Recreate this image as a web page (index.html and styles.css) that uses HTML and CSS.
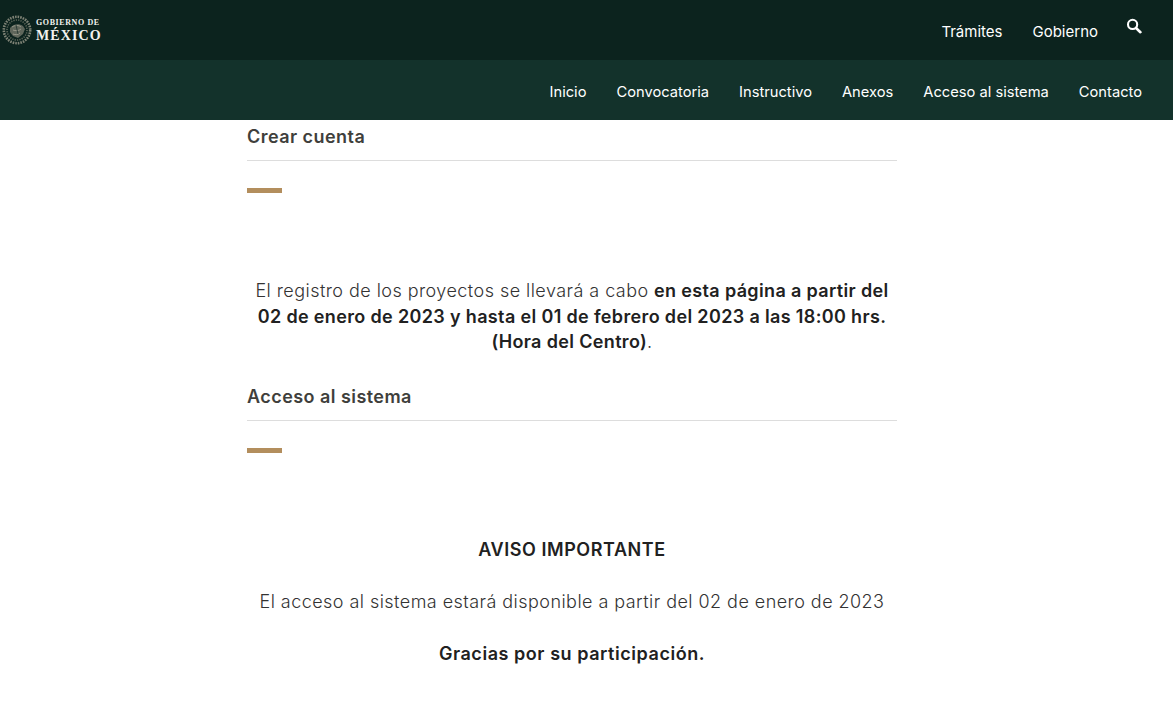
FILE: index.html
```html
<!DOCTYPE html>
<html lang="es">
<head>
    <meta charset="UTF-8">
    <title>Crear cuenta</title>
    <link rel="stylesheet" href="styles.css">
</head>

<body>
    <header class="top-bar">
        <a class="brand" href="#">
            <svg class="seal" viewBox="0 0 30 30" width="30" height="30">
                <circle cx="15" cy="15" r="13.2" fill="none" stroke="#7f8376" stroke-width="2.6" stroke-dasharray="1.6 1"/>
                <circle cx="15" cy="15" r="10" fill="none" stroke="#5f675b" stroke-width="1.6" stroke-dasharray="1.2 1.2"/>
                <path d="M8 13c3-4 9-5 13-2l2 3-2 5-5 4-5-2-3-4z" fill="#5f665b"/>
                <path d="M10 12c3-2 7-2 9 0M11 15c2 1 6 1 8-1M11 19c2 1 5 1 7-1" fill="none" stroke="#a4a596" stroke-width="0.8"/>
                <path d="M14 10l2 9" stroke="#2c3d36" stroke-width="1"/>
            </svg>
            <span class="brand-text">
                <span class="brand-small">GOBIERNO DE</span>
                <span class="brand-big">MÉXICO</span>
            </span>
        </a>
        <nav class="top-links">
            <a href="#">Trámites</a>
            <a href="#">Gobierno</a>
            <a class="search" href="#">
                <svg viewBox="0 0 16 16" width="16" height="16">
                    <circle cx="6.6" cy="6.4" r="4.6" fill="none" stroke="#fff" stroke-width="2.1"/>
                    <path d="M10 10l4.4 4.2" stroke="#fff" stroke-width="2.6" stroke-linecap="round"/>
                </svg>
            </a>
        </nav>
    </header>

    <nav class="main-nav">
        <a href="#">Inicio</a>
        <a href="#">Convocatoria</a>
        <a href="#">Instructivo</a>
        <a href="#">Anexos</a>
        <a href="#">Acceso al sistema</a>
        <a href="#">Contacto</a>
    </nav>

    <main class="content">
        <h2>Crear cuenta</h2>
        <div class="divider"></div>
        <div class="accent"></div>
        <p class="notice">El registro de los proyectos se llevará a cabo <b>en esta página a partir del 02 de enero de 2023 y hasta el 01 de febrero del 2023 a las 18:00 hrs. (Hora del Centro)</b>.</p>

        <h2 class="second">Acceso al sistema</h2>
        <div class="divider"></div>
        <div class="accent tight"></div>
        <p class="aviso"><b>AVISO IMPORTANTE</b></p>
        <p class="aviso">El acceso al sistema estará disponible a partir del 02 de enero de 2023</p>
        <p class="aviso"><b>Gracias por su participación.</b></p>
    </main>
</body>

</html>
```

FILE: styles.css
```css
body {
    font-family: Inter, "Noto Sans", sans-serif;
    background-color: #fff;
    color: #333;
    margin: 0;
}

a {
    color: #fff;
    text-decoration: none;
}

.top-bar {
    height: 60px;
    background-color: #0c231e;
    display: flex;
    justify-content: space-between;
    align-items: center;
    padding: 0 31px 0 2px;
}

.brand {
    display: flex;
    align-items: center;
    gap: 4px;
}

.brand-text {
    display: flex;
    flex-direction: column;
    font-family: "Liberation Serif", serif;
    font-weight: bold;
    color: #f2f2ee;
}

.brand-small {
    font-size: 8px;
    line-height: 10px;
    letter-spacing: 0.6px;
}

.brand-big {
    font-size: 14px;
    line-height: 15px;
    letter-spacing: 1.1px;
}

.top-links {
    display: flex;
    align-items: center;
    gap: 30px;
    font-size: 15px;
    padding-top: 3px;
}

.search {
    display: flex;
    margin: -11px 0 0 -2px;
}

.main-nav {
    height: 60px;
    background-color: #13322b;
    display: flex;
    justify-content: flex-end;
    align-items: center;
    gap: 30px;
    padding: 3px 31px 0 0;
    box-sizing: border-box;
    font-size: 14.7px;
}

.content {
    width: 650px;
    margin-left: 247px;
}

h2 {
    font-size: 18px;
    font-weight: 600;
    line-height: 22px;
    letter-spacing: 0.45px;
    color: #3f3f3c;
    margin: 0;
    padding: 6px 0 12px;
}

h2.second {
    margin-top: 25px;
}

.divider {
    height: 1px;
    background-color: #ddd;
}

.accent {
    width: 35px;
    height: 5px;
    background-color: #b38e5d;
    margin: 27px 0 85px;
}

.accent.tight {
    margin-bottom: 84px;
}

.notice,
.aviso {
    font-size: 18px;
    line-height: 25.7px;
    letter-spacing: 0.45px;
    font-weight: 300;
    text-align: center;
    margin: 0;
}

.aviso {
    margin-bottom: 26px;
}

b {
    font-weight: 600;
    letter-spacing: 0.55px;
    color: #212121;
}

.notice b {
    letter-spacing: 0.35px;
}
```
